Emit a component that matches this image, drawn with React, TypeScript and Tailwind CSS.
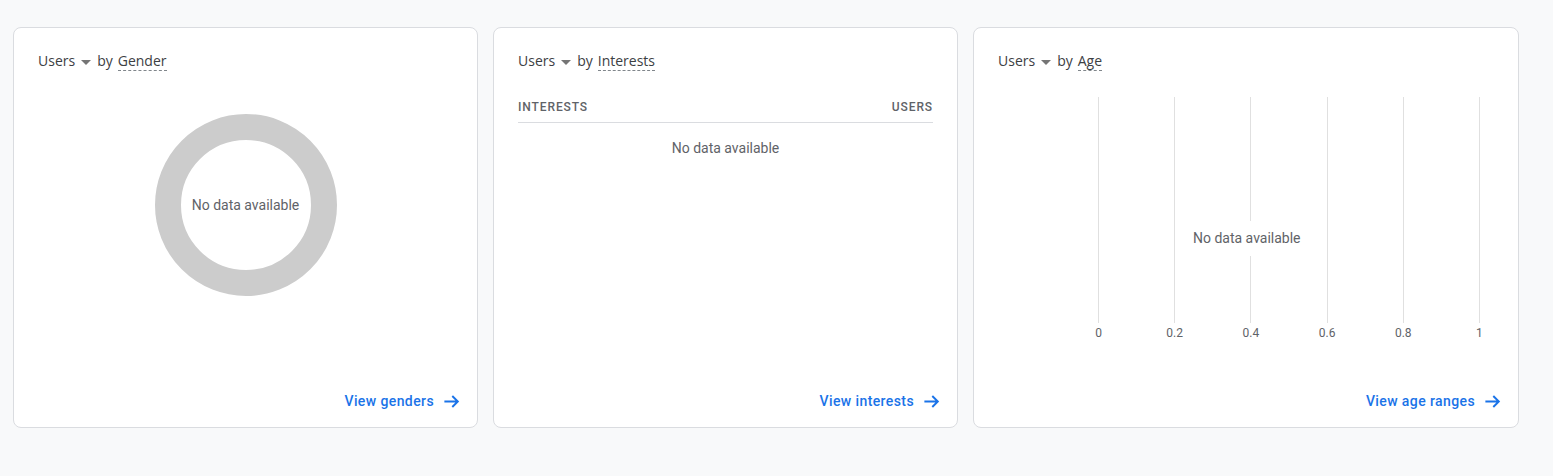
const font = { fontFamily: 'Roboto, "Liberation Sans", sans-serif' };
const sans = { fontFamily: '"Open Sans", Roboto, sans-serif' };

const Caret = () => (
  <svg width="10" height="5" viewBox="0 0 10 5" className="mx-[6px] mt-[2px]">
    <path d="M0 0 L10 0 L5 5 Z" fill="#757575" />
  </svg>
);

const Title = ({ dim }: { dim: string }) => (
  <div className="flex items-center text-[14px] text-[#3c4043] leading-5" style={sans}>
    <span>Users</span>
    <Caret />
    <span>by</span>
    <span className="ml-[5px] border-b border-dashed border-[#80868b] leading-[18px]">{dim}</span>
  </div>
);

const Footer = ({ label }: { label: string }) => (
  <div className="mt-auto flex justify-end items-center gap-2 text-[14px] font-medium tracking-[0.4px] text-[#1a73e8] pr-[16px] pb-[15px]">
    <span>{label}</span>
    <svg width="19" height="19" viewBox="0 0 24 24" fill="none" stroke="#1a73e8" strokeWidth="2.4">
      <path d="M3 12 H20 M13 5 L20 12 L13 19" />
    </svg>
  </div>
);

const Card = ({ w, children }: { w: string; children: React.ReactNode }) => (
  <div className={`${w} h-[401px] bg-white border border-[#dadce0] rounded-lg flex flex-col`}>{children}</div>
);

export default function App() {
  return (
    <div className="w-[1553px] h-[476px] bg-[#f8f9fa] pt-[27px] pl-[13px] flex gap-[15px]" style={font}>
      <Card w="w-[465px]">
        <div className="pt-[23px] pl-[24px]">
          <Title dim="Gender" />
        </div>
        <div className="flex justify-center mt-[43px]">
          <div className="w-[182px] h-[182px] rounded-full border-[26px] border-[#cccccc] flex items-center justify-center">
            <span className="text-[14px] text-[#5f6368] whitespace-nowrap">No data available</span>
          </div>
        </div>
        <Footer label="View genders" />
      </Card>

      <Card w="w-[465px]">
        <div className="pt-[23px] pl-[24px]">
          <Title dim="Interests" />
        </div>
        <div className="mx-[24px] mt-[27px] flex justify-between text-[12px] font-medium tracking-[0.9px] text-[#5f6368] pb-[6px] border-b border-[#dadce0]">
          <span>INTERESTS</span>
          <span>USERS</span>
        </div>
        <div className="text-center text-[14px] text-[#5f6368] mt-[15px]">No data available</div>
        <Footer label="View interests" />
      </Card>

      <Card w="w-[546px]">
        <div className="pt-[23px] pl-[24px]">
          <Title dim="Age" />
        </div>
        <div className="relative ml-[124px] mr-[38px] mt-[26px]">
          <div className="flex justify-between h-[226px]">
            {[0, 1, 2, 3, 4, 5].map((i) => (
              <div key={i} className="w-px bg-[#e0e0e0]" />
            ))}
          </div>
          <div className="absolute left-[92px] top-[124px]">
            <span className="block bg-white px-[3px] py-[7px] text-[14px] text-[#5f6368] whitespace-nowrap">No data available</span>
          </div>
          <div className="flex justify-between text-[12px] text-[#5f6368] mt-[1px] -mx-[10px]">
            {['0', '0.2', '0.4', '0.6', '0.8', '1'].map((l) => (
              <span key={l} className="w-[21px] text-center">{l}</span>
            ))}
          </div>
        </div>
        <Footer label="View age ranges" />
      </Card>
    </div>
  );
}
